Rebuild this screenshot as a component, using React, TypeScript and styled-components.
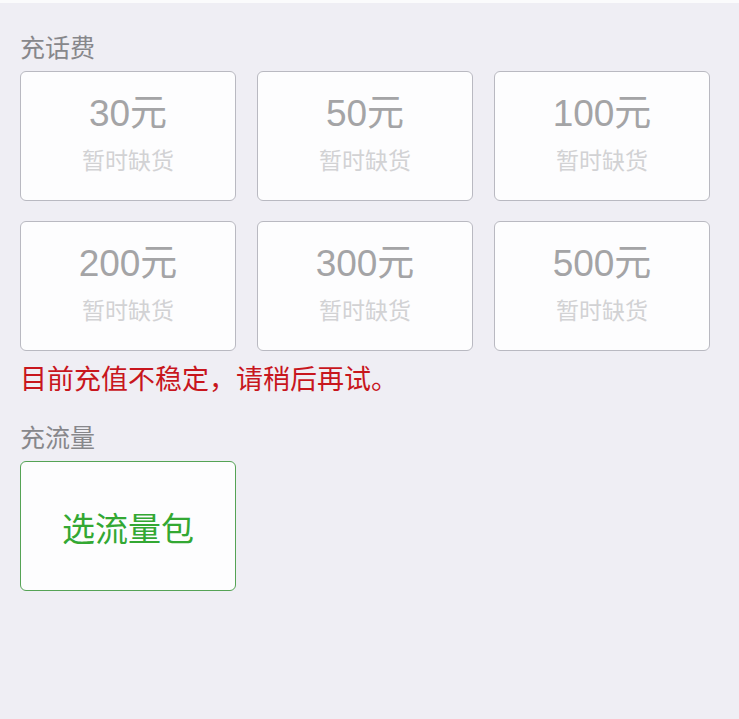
import * as React from 'react';
import styled, { createGlobalStyle } from 'styled-components';

const GlobalStyle = createGlobalStyle`
    html, body {
        margin: 0;
        padding: 0;
        background: #efeef4;
    }
    body {
        font-family: "Liberation Sans", "Noto Sans CJK SC", sans-serif;
    }
`;

const Page = styled.div`
    min-height: 719px;
    background: #efeef4;
    border-top: 3px solid #fbfbfc;
    box-sizing: border-box;
    padding: 29px 30px 0 20px;
`;

const SectionTitle = styled.div`
    font-family: "Noto Sans CJK SC", sans-serif;
    font-size: 25px;
    line-height: 28px;
    color: #87878b;
    margin-bottom: 11px;
`;

const CardGrid = styled.div`
    display: grid;
    grid-template-columns: repeat(3, 216px);
    grid-auto-rows: 130px;
    column-gap: 21px;
    row-gap: 20px;
`;

const Card = styled.div<{ $active?: boolean }>`
    box-sizing: border-box;
    background: #fdfdfe;
    border: 1px solid ${p => (p.$active ? '#55a355' : '#b9b9c1')};
    border-radius: 6px;
    display: flex;
    flex-direction: column;
    align-items: center;
    justify-content: ${p => (p.$active ? 'center' : 'flex-start')};
    padding-top: ${p => (p.$active ? '0' : '22px')};
`;

const Amount = styled.div`
    font-family: "Liberation Sans", "Noto Sans CJK SC", sans-serif;
    font-size: 37px;
    line-height: 40px;
    color: #a4a4a6;
`;

const SoldOut = styled.div`
    font-family: "Noto Sans CJK SC", sans-serif;
    font-size: 23px;
    line-height: 26px;
    margin-top: 12px;
    color: #d2d2d4;
`;

const Warning = styled.div`
    font-family: "Noto Sans CJK SC", sans-serif;
    font-size: 27px;
    line-height: 30px;
    color: #c8161d;
    margin: 12px 0 29px 0;
`;

const PackText = styled.div`
    font-family: "Noto Sans CJK SC", sans-serif;
    font-size: 33px;
    line-height: 40px;
    color: #33a833;
    margin-top: 1px;
`;

const amounts = [30, 50, 100, 200, 300, 500];

export default function App() {
    return (
        <>
            <GlobalStyle />
            <Page>
                <SectionTitle>充话费</SectionTitle>
                <CardGrid>
                    {amounts.map(a => (
                        <Card key={a}>
                            <Amount>{a}元</Amount>
                            <SoldOut>暂时缺货</SoldOut>
                        </Card>
                    ))}
                </CardGrid>
                <Warning>目前充值不稳定，请稍后再试。</Warning>
                <SectionTitle>充流量</SectionTitle>
                <CardGrid>
                    <Card $active>
                        <PackText>选流量包</PackText>
                    </Card>
                </CardGrid>
            </Page>
        </>
    );
}
